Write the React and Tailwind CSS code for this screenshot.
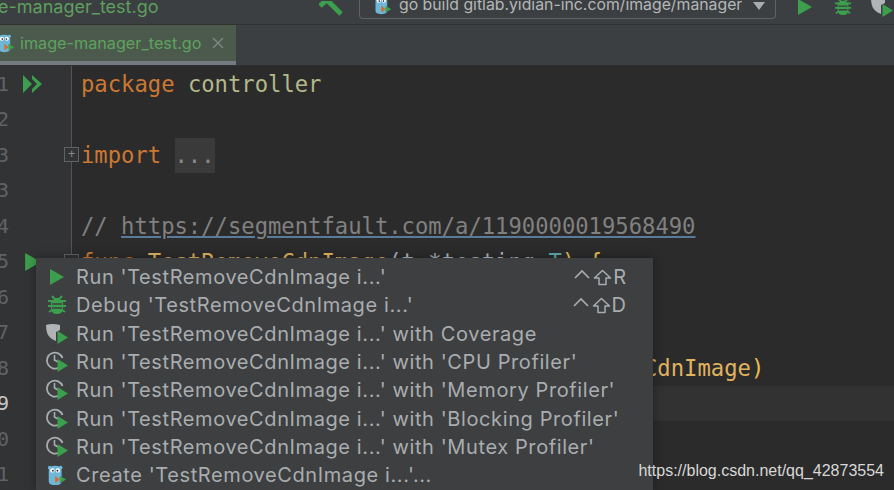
const mono = "font-['DejaVu_Sans_Mono','Liberation_Mono',monospace]";
const ui = "font-['Inter','Liberation_Sans',sans-serif]";

function Play({ size = 16, className = "" }) {
  return (
    <svg width={size} height={size} viewBox="0 0 16 16" className={className}>
      <path d="M1 0 L15 8 L1 16 Z" fill="#3c9f4d" />
    </svg>
  );
}
function Bug({ size = 20, color = "#3c9f4d" }) {
  return (
    <svg width={size} height={size} viewBox="0 0 20 20">
      <path d="M5 1 L7.5 4 H12.5 L15 1 M1 6 H19 M1 11 H19 M2 17 L5 15 M18 17 L15 15" stroke={color} strokeWidth="2" fill="none" />
      <path d="M4 5 H16 V13 Q16 19 10 19 Q4 19 4 13 Z" fill={color} />
      <path d="M5 9 H15 M5 13 H15" stroke="#3d3f41" strokeWidth="1.6" />
    </svg>
  );
}
function Gopher({ size = 22, play = false }) {
  return (
    <svg width={size} height={size} viewBox="0 0 22 24">
      <circle cx="3" cy="4" r="2" fill="#6fb7d8" />
      <circle cx="15" cy="4" r="2" fill="#6fb7d8" />
      <path d="M2 8 Q2 2 9 2 Q16 2 16 8 V19 Q16 23 9 23 Q2 23 2 19 Z" fill="#6fb7d8" />
      <circle cx="6" cy="7" r="2.4" fill="#fff" />
      <circle cx="12" cy="7" r="2.4" fill="#fff" />
      <circle cx="6.5" cy="7.3" r="1" fill="#222" />
      <circle cx="11.5" cy="7.3" r="1" fill="#222" />
      <path d="M9 13 L14 17 L9 21 Z" fill="#d9692f" />
      {play && <path d="M14 13 L21 17 L14 21 Z" fill="#3c9f4d" />}
    </svg>
  );
}
function Profiler() {
  return (
    <svg width="24" height="24" viewBox="0 0 24 24">
      <path d="M14 17.5 A8 8 0 1 1 17.5 8" stroke="#a9adb0" strokeWidth="1.8" fill="none" />
      <path d="M9.5 5 V10 L13 12" stroke="#a9adb0" strokeWidth="1.6" fill="none" />
      <path d="M12.5 9 L23 15.5 L12.5 22 Z" fill="#3c9f4d" />
    </svg>
  );
}
function Coverage() {
  return (
    <svg width="24" height="24" viewBox="0 0 24 24">
      <path d="M1 3 Q7 1 15 3 V8 L11 10 V19 Q5 17 2.5 12 Q1 8 1 3 Z" fill="#b1b4b6" />
      <path d="M12.5 9 L23 15.5 L12.5 22 Z" fill="#3c9f4d" />
    </svg>
  );
}
function ShiftKey() {
  return (
    <svg width="19" height="17" viewBox="0 0 19 17" className="mx-[1px]">
      <path d="M9.5 1.5 L17.5 9 H13 V15.5 H6 V9 H1.5 Z" stroke="#a9adb0" strokeWidth="1.5" fill="none" strokeLinejoin="round" />
    </svg>
  );
}
function Ctrl() {
  return (
    <svg width="16" height="10" viewBox="0 0 16 10" className="-mt-[6px] mr-[2px]">
      <path d="M1 9 L8 2 L15 9" stroke="#a9adb0" strokeWidth="1.6" fill="none" />
    </svg>
  );
}

const menu = [
  [<Play size={16} />, "Run 'TestRemoveCdnImage i...'", "R"],
  [<Bug />, "Debug 'TestRemoveCdnImage i...'", "D"],
  [<Coverage />, "Run 'TestRemoveCdnImage i...' with Coverage"],
  [<Profiler />, "Run 'TestRemoveCdnImage i...' with 'CPU Profiler'"],
  [<Profiler />, "Run 'TestRemoveCdnImage i...' with 'Memory Profiler'"],
  [<Profiler />, "Run 'TestRemoveCdnImage i...' with 'Blocking Profiler'"],
  [<Profiler />, "Run 'TestRemoveCdnImage i...' with 'Mutex Profiler'"],
  [<Gopher play />, "Create 'TestRemoveCdnImage i...'..."],
];

const lines = [
  ["1", <><span className="text-[#cc7832]">package</span> <span className="text-[#b4b98a]">controller</span></>],
  ["2", ""],
  ["3", <><span className="text-[#cc7832]">import</span> <span className="inline-block bg-[#3a3a3a] h-[35px] leading-[35px] text-[#8a8a8a]">...</span></>],
  ["3", ""],
  ["4", <span className="text-[#808080]">// <span className="underline decoration-[#5a7a99]">https://segmentfault.com/a/1190000019568490</span></span>],
  ["5", <><span className="text-[#cc7832]">func</span> <span className="text-[#e0b35f]">TestRemoveCdnImage</span><span className="text-[#a9b7c6]">(t *testing.</span><span className="text-[#5fa8a8]">T</span><span className="text-[#e8bf4f]">)</span> <span className="text-[#e8bf4f]">{"{"}</span></>],
  ["6", ""],
  ["7", ""],
  ["8", <span className="inline-block pl-[563px] text-[#e0b35f]">CdnImage<span className="text-[#e8bf4f]">)</span></span>],
  ["9", ""],
  ["0", ""],
  ["1", ""],
];

export default function App() {
  return (
    <div className="w-[894px] h-[490px] overflow-hidden bg-[#2b2b2b] relative flex flex-col">
      <div className="h-[25px] shrink-0 bg-[#3c3f41] border-b border-[#323232] flex items-start overflow-hidden">
        <span className={`${ui} text-[18px] leading-[14px] text-[#5e9e5e] -ml-[2px]`}>e-manager_test.go</span>
        <div className="ml-auto flex items-center h-[19px]">
          <svg width="24" height="18" viewBox="0 0 24 18" className="mr-[16px]">
            <path d="M7 -2 L22 13" stroke="#3c9f4d" strokeWidth="5" />
            <path d="M1 5 L10 -3" stroke="#3c9f4d" strokeWidth="5" />
          </svg>
          <div className="w-[417px] h-[20px] -mt-[1px] border border-[#5f6264] border-t-0 rounded-b-[4px] flex items-center pl-[13px] pr-[9px]">
            <div className="w-[22px] h-[20px] -mt-[8px] overflow-hidden"><Gopher size={20} play /></div>
            <span className={`${ui} text-[15.8px] leading-[16px] -mt-[7px] ml-[4px] text-[#b4b7b9] whitespace-nowrap`}>go build gitlab.yidian-inc.com/image/manager</span>
            <svg width="14" height="8" viewBox="0 0 14 8" className="ml-auto -mt-[6px]"><path d="M1 0 H13 L7 8 Z" fill="#aaadaf" /></svg>
          </div>
          <Play size={16} className="ml-[21px] -mt-[6px]" />
          <div className="ml-[21px] -mt-[6px]"><Bug size={18} /></div>
          <div className="ml-[18px] -mt-[6px] w-[24px] overflow-hidden"><Coverage /></div>
        </div>
      </div>

      <div className="h-[41px] shrink-0 bg-[#3c3f41] flex border-b border-[#2f3031]">
        <div className="w-[236px] h-full bg-[#4b5a4c] border-b-[4px] border-[#747a80] flex items-center">
          <div className="-ml-[4px]"><Gopher size={20} play /></div>
          <span className={`${ui} ml-[4px] text-[16.2px] text-[#5fa25f] whitespace-nowrap`}>image-manager_test.go</span>
          <svg width="12" height="12" viewBox="0 0 12 12" className="ml-[11px]"><path d="M1 1 L11 11 M11 1 L1 11" stroke="#7f8a80" strokeWidth="1.4" /></svg>
        </div>
      </div>

      <div className={`flex-1 flex flex-col ${mono} text-[22.2px]`}>
        {lines.map(([n, code], i) => (
          <div key={i} className={`h-[35.5px] shrink-0 flex items-center ${i === 9 ? "bg-[#323232]" : ""}`}>
            <div className="w-[72px] h-full shrink-0 bg-[#313335] border-r border-[#555] flex items-center relative">
              <span className={`text-[20px] -ml-[3px] ${i === 9 ? "text-[#c8c8c8]" : "text-[#606366]"}`}>{n}</span>
              {i === 0 && (
                <svg width="20" height="18" viewBox="0 0 20 18" className="absolute left-[23px] top-[9px]">
                  <path d="M0 0 L9 9 L0 18 Z M9 0 L19 9 L9 18 L9 14 L14 9 L9 4 Z" fill="#3c9f4d" />
                </svg>
              )}
              {i === 2 && <span className="absolute left-[64px] top-[10px] w-[15px] h-[15px] border border-[#606366] bg-[#313335] text-[#888] text-[12px] leading-[12px] text-center">+</span>}
              {i === 5 && <><Play size={18} className="absolute left-[24px] top-[9px]" /><span className="absolute left-[64px] top-[10px] w-[15px] h-[15px] border border-[#606366] bg-[#313335]" /></>}
            </div>
            <div className="pl-[9px] pt-[2px] whitespace-pre leading-[35px]">{code}</div>
          </div>
        ))}
      </div>

      <div className="absolute left-[36px] top-[258px] w-[617px] h-[232px] bg-[#3d3f41] pt-[5px] shadow-[0_0_10px_rgba(0,0,0,0.35)]">
        {menu.map(([icon, text, key], i) => (
          <div key={i} className={`${ui} h-[28.3px] flex items-center text-[#a9adaf] text-[20px] tracking-[0.6px] whitespace-nowrap`}>
            <div className="w-[40px] shrink-0 flex justify-center pl-[2px]">{icon}</div>
            <span>{text}</span>
            {key && (
              <span className="ml-auto mr-[27px] flex items-center text-[#a9adaf] tracking-normal">
                <Ctrl /><ShiftKey />{key}
              </span>
            )}
          </div>
        ))}
      </div>

      <span className="absolute right-[10px] top-[459px] font-['Liberation_Sans',sans-serif] text-[16px] text-[#d8d8d8] whitespace-nowrap">https://blog.csdn.net/qq_42873554</span>
    </div>
  );
}
